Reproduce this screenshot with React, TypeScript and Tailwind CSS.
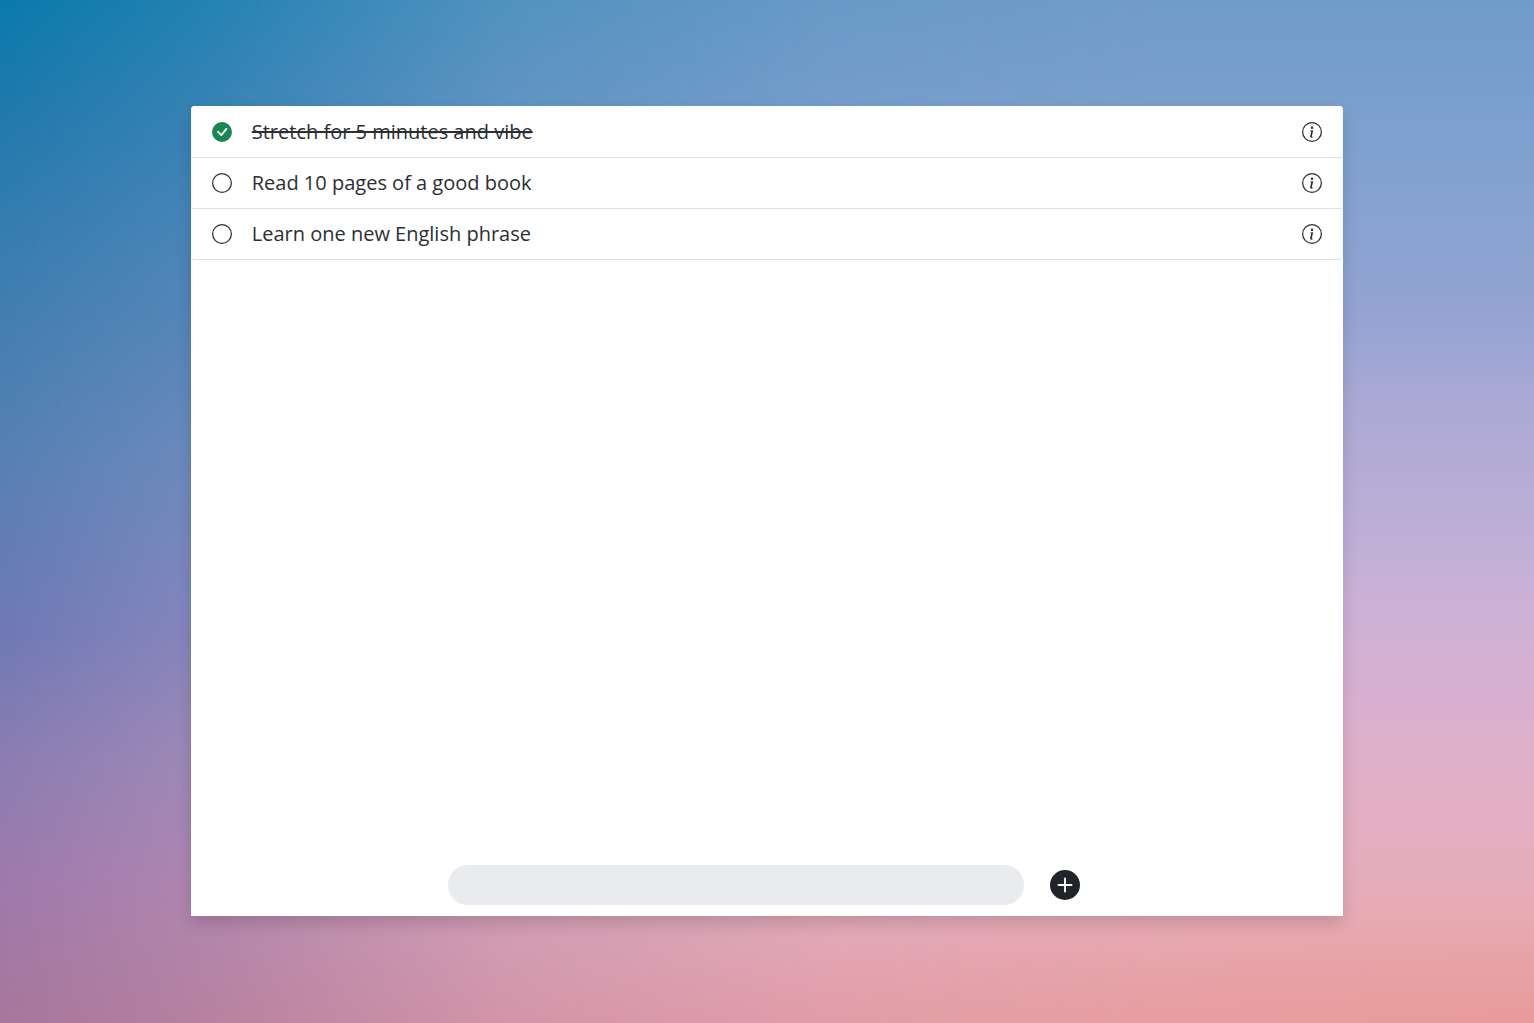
import { useState, type FormEvent } from "react";
import { BsCheckCircleFill, BsCircle, BsInfoCircle, BsPlusCircleFill } from "react-icons/bs";

type Task = { id: number; title: string; done: boolean };

const initialTasks: Task[] = [
  { id: 1, title: "Stretch for 5 minutes and vibe", done: true },
  { id: 2, title: "Read 10 pages of a good book", done: false },
  { id: 3, title: "Learn one new English phrase", done: false },
];

function Backdrop() {
  return (
    <div aria-hidden="true" className="pointer-events-none absolute inset-0 -z-10 bg-[linear-gradient(to_bottom,#0a7aac_0%,#1f79ad_10%,#3a7db0_25%,#5780b4_45%,#7079b5_62%,#8a7db2_74%,#9e7aad_86%,#a8779c_100%)]">
      <div className="h-full w-full bg-[radial-gradient(60%_16%_at_100%_102%,rgba(233,155,150,0.9)_0%,transparent_100%),linear-gradient(to_bottom,#709cc8_0%,#80a1cf_15%,#93a3d3_30%,#aca9d5_40%,#baaed6_50%,#ccb1d7_59%,#dab0d0_69%,#e2afc4_78%,#e7adb9_90%,#e5a1ad_100%)] [mask-image:linear-gradient(to_right,transparent_0%,rgba(0,0,0,0.22)_12%,rgba(0,0,0,0.7)_33%,rgba(0,0,0,0.93)_54%,black_75%)]" />
    </div>
  );
}

function TaskRow({ task, onToggle }: { task: Task; onToggle: () => void }) {
  return (
    <li className="flex h-[51px] items-center justify-between border-b border-[#dee2e6] px-5 last:h-[50px] last:border-b-0">
      <label className="relative flex cursor-pointer items-center gap-5">
        <input type="checkbox" checked={task.done} onChange={onToggle} className="peer sr-only" />
        {task.done ? (
          <BsCheckCircleFill className="size-5 shrink-0 text-[#198754]" />
        ) : (
          <BsCircle className="size-5 shrink-0" />
        )}
        <span className={task.done ? "line-through decoration-2" : ""}>{task.title}</span>
      </label>
      <button type="button" aria-label={`About ${task.title}`} className="cursor-pointer">
        <BsInfoCircle className="size-5" />
      </button>
    </li>
  );
}

export default function App() {
  const [tasks, setTasks] = useState(initialTasks);
  const [draft, setDraft] = useState("");

  const toggle = (id: number) =>
    setTasks((list) => list.map((t) => (t.id === id ? { ...t, done: !t.done } : t)));

  const add = (event: FormEvent) => {
    event.preventDefault();
    const title = draft.trim();
    if (!title) return;
    setTasks((list) => [...list, { id: Date.now(), title, done: false }]);
    setDraft("");
  };

  return (
    <main className="relative isolate flex min-h-screen justify-center pt-[106px] pb-[107px] font-['Open_Sans',sans-serif] text-xl text-[#2b2f33]">
      <Backdrop />
      <section className="flex w-[calc(75%+2px)] flex-col rounded-t-sm bg-white shadow-[0_8px_16px_rgba(0,0,0,0.15)]">
        <ul className="rounded-sm border border-x-[#f3f5f7] border-t-white border-b-[#dee2e6]">
          {tasks.map((task) => (
            <TaskRow key={task.id} task={task} onToggle={() => toggle(task.id)} />
          ))}
        </ul>
        <form onSubmit={add} className="mt-auto flex items-center justify-center gap-5 pb-[11px]">
          <input
            type="text"
            aria-label="New task"
            value={draft}
            onChange={(e) => setDraft(e.target.value)}
            className="h-10 w-1/2 rounded-full bg-[#e9ebee] px-5 outline-none"
          />
          <button type="submit" aria-label="Add task" className="cursor-pointer px-1.5 text-[#212529]">
            <BsPlusCircleFill className="size-[30px]" />
          </button>
        </form>
      </section>
    </main>
  );
}
